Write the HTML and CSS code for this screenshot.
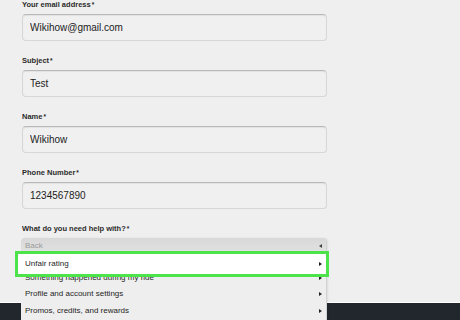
FILE: index.html
```html
<!DOCTYPE html>
<html lang="en">
<head>
  <meta charset="UTF-8">
  <title>Help form</title>
  <link rel="stylesheet" href="styles.css">
</head>
<body>

<form class="form">
  <div class="field">
    <label>Your email address<span class="req">*</span></label>
    <input type="text" value="Wikihow@gmail.com" readonly>
  </div>
  <div class="field">
    <label>Subject<span class="req">*</span></label>
    <input type="text" value="Test" readonly>
  </div>
  <div class="field">
    <label>Name<span class="req">*</span></label>
    <input type="text" value="Wikihow" readonly>
  </div>
  <div class="field">
    <label>Phone Number<span class="req">*</span></label>
    <input type="text" value="1234567890" readonly>
  </div>
  <div class="field help">
    <label>What do you need help with?<span class="req">*</span></label>
    <ul class="menu">
      <li class="back">Back</li>
      <li class="item">Unfair rating</li>
      <li class="item">Something happened during my ride</li>
      <li class="item">Profile and account settings</li>
      <li class="item">Promos, credits, and rewards</li>
    </ul>
    <div class="picked">Unfair rating</div>
  </div>
</form>

<footer class="footer"></footer>

</body>
</html>
```

FILE: styles.css
```css
* { margin: 0; padding: 0; box-sizing: border-box; font-family: 'Liberation Sans', Arial, sans-serif; }
body { background: #efefef; color: #333; height: 320px; overflow: hidden; display: flex; flex-direction: column; }
.form { flex: 1; padding-left: 22px; width: 327px; }
.field { margin-bottom: 15px; }
.field label { display: block; font-size: 7.5px; font-weight: bold; line-height: 10px; margin-bottom: 4px; color: #2b2b2b; }
.req { margin-left: 1px; font-size: 6.5px; }
.field input { display: block; width: 305px; height: 27px; padding: 0 7px; font-size: 10px; color: #1c1c1c; background: #f0f0f0; border: 1px solid #d6d6d6; border-top-color: #b9b9b9; border-radius: 4px; box-shadow: inset 0 1px 1px rgba(0,0,0,0.06); outline: none; }

.help { position: relative; }
.menu { list-style: none; position: absolute; top: 14px; left: -1px; width: 306px; height: 82px; background: #eeeeee; border-right: 1px solid #d2d2d2; border-radius: 4px 4px 0 0; box-shadow: 1px 0 2px rgba(0,0,0,0.08); overflow: hidden; z-index: 2; }
.menu li { position: relative; font-size: 8px; padding-left: 4px; color: #1e1e1e; }
.menu li::after { content: ''; position: absolute; right: 4px; top: 50%; margin-top: -2px; border-top: 2px solid transparent; border-bottom: 2px solid transparent; border-left: 3px solid #222; }
.back { height: 15px; line-height: 15px; color: #9a9a9a !important; background: linear-gradient(#d8d8d8, #e2e2e2); }
.menu li.back::after { border-left: none; border-right: 3px solid #444; }
.item { height: 16.5px; line-height: 16.5px; }

.picked { position: absolute; z-index: 3; top: 27px; left: -7px; width: 314px; height: 26px; background: #fff; border: 3px solid #4ce34b; font-size: 8px; line-height: 19px; padding-left: 7px; color: #1e1e1e; }
.picked::after { content: ''; position: absolute; right: 4px; top: 50%; margin-top: -2px; border-top: 2px solid transparent; border-bottom: 2px solid transparent; border-left: 3px solid #222; }

.footer { height: 18px; background: #22272e; border-top: 1px solid #fff; flex-shrink: 0; }
```
